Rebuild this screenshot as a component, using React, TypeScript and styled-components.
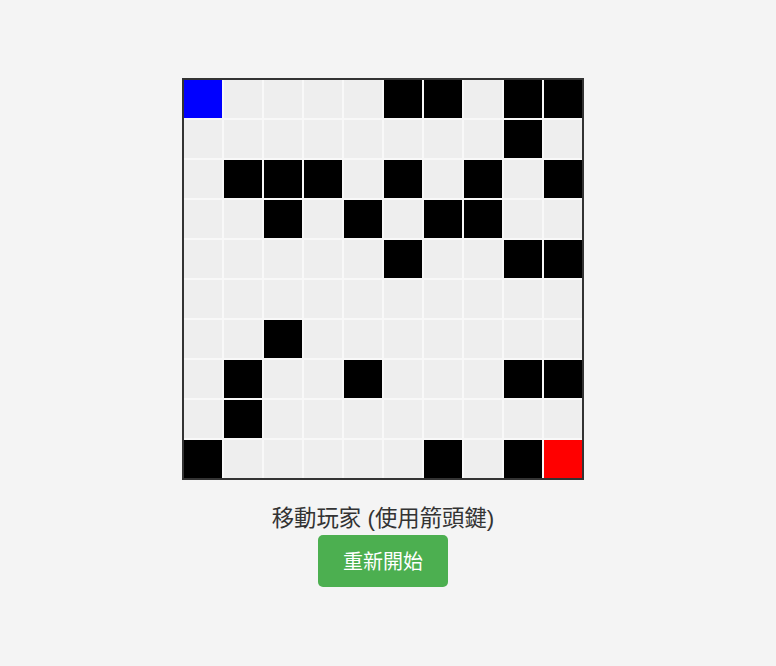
import React from "react";
import styled, { createGlobalStyle } from "styled-components";

const GlobalStyle = createGlobalStyle`
  html, body { margin: 0; padding: 0; }
  body {
    background: #f4f4f4;
    font-family: "Liberation Sans", "Noto Sans CJK TC", sans-serif;
  }
`;

const Page = styled.div`
  height: 100vh;
  box-sizing: border-box;
  padding: 0 10px 2px 0;
  display: flex;
  flex-direction: column;
  align-items: center;
  justify-content: center;
`;

const Board = styled.div`
  display: grid;
  grid-template-columns: repeat(10, 38px);
  grid-auto-rows: 38px;
  gap: 2px;
  border: 2px solid #333;
  background: #f8f8f8;
`;

type Kind = "e" | "w" | "p" | "g";

const colors: Record<Kind, string> = {
  e: "#eeeeee",
  w: "#000000",
  p: "#0000ff",
  g: "#ff0000",
};

const Cell = styled.div<{ $kind: Kind }>`
  background: ${(p) => colors[p.$kind]};
`;

const Label = styled.p`
  margin: 22px 0 0;
  font-size: 22.4px;
  line-height: 33px;
  color: #333;
  font-family: "Liberation Sans", "Noto Sans CJK TC", sans-serif;
`;

const Button = styled.button`
  height: 52px;
  padding: 0 25px;
  border: none;
  border-radius: 5px;
  background: #4caf50;
  color: #fff;
  font-size: 20px;
  font-family: "Liberation Sans", "Noto Sans CJK TC", sans-serif;
  cursor: pointer;
`;

const MAP = [
  "peeeewweww",
  "eeeeeeeewe",
  "ewwwewewew",
  "eewewewwee",
  "eeeeeweeww",
  "eeeeeeeeee",
  "eeweeeeeee",
  "eweeweeeww",
  "eweeeeeeee",
  "weeeeewewg",
];

export default function App() {
  return (
    <>
      <GlobalStyle />
      <Page>
        <Board>
          {MAP.flatMap((row, r) =>
            row.split("").map((k, c) => <Cell key={`${r}-${c}`} $kind={k as Kind} />)
          )}
        </Board>
        <Label>移動玩家 (使用箭頭鍵)</Label>
        <Button>重新開始</Button>
      </Page>
    </>
  );
}
